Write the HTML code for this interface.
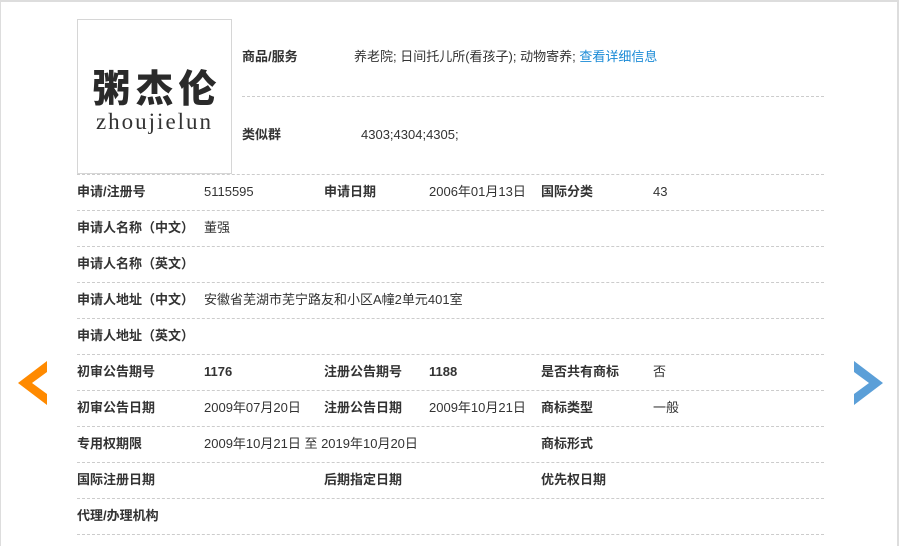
<!DOCTYPE html>
<html><head><meta charset="utf-8"><style>
*{margin:0;padding:0;box-sizing:border-box}
body{width:901px;height:546px;background:#fff;position:relative;overflow:hidden;font-family:"Liberation Sans","Noto Sans CJK SC",sans-serif;font-size:13px;color:#333}
.frame{position:absolute;left:0;top:0;width:899px;height:546px;border-left:1px solid #ddd;border-top:2px solid #ddd;border-right:2px solid #ddd}
.logo{position:absolute;left:77px;top:19px;width:155px;height:155px;border:1px solid #d6d6d6;text-align:center}
.logo .cn{font-family:"Noto Sans CJK SC",sans-serif;font-weight:900;font-size:38px;color:#2a2a2a;margin-top:46px;line-height:40px;letter-spacing:5px;padding-left:5px}
.logo .en{font-family:"Liberation Serif",serif;font-size:23px;color:#333;letter-spacing:2px;line-height:26px;margin-top:3px}
.line{position:absolute;border-top:1px dashed #ccc;height:0}
.t{position:absolute;white-space:nowrap;line-height:16px}
.b{font-weight:bold}
a{color:#1a8ad6;text-decoration:none}
</style></head><body>
<div class="frame"></div>
<div class="logo"><div class="cn">粥杰伦</div><div class="en">zhoujielun</div></div>
<div class="t b" style="left:242px;top:49px">商品/服务</div>
<div class="t" style="left:354px;top:49px">养老院; 日间托儿所(看孩子); 动物寄养; <a>查看详细信息</a></div>
<div class="line" style="left:242px;width:582px;top:96px"></div>
<div class="t b" style="left:242px;top:127px">类似群</div>
<div class="t" style="left:361px;top:127px">4303;4304;4305;</div>
<div class="line" style="left:77px;width:747px;top:174px"></div>

<div class="t b" style="left:77px;top:184px">申请/注册号</div>
<div class="t" style="left:204px;top:184px">5115595</div>
<div class="t b" style="left:324px;top:184px">申请日期</div>
<div class="t" style="left:429px;top:184px">2006年01月13日</div>
<div class="t b" style="left:541px;top:184px">国际分类</div>
<div class="t" style="left:653px;top:184px">43</div>
<div class="line" style="left:77px;width:747px;top:210px"></div>

<div class="t b" style="left:77px;top:220px">申请人名称（中文）</div>
<div class="t" style="left:204px;top:220px">董强</div>
<div class="line" style="left:77px;width:747px;top:246px"></div>
<div class="t b" style="left:77px;top:256px">申请人名称（英文）</div>
<div class="line" style="left:77px;width:747px;top:282px"></div>
<div class="t b" style="left:77px;top:292px">申请人地址（中文）</div>
<div class="t" style="left:204px;top:292px">安徽省芜湖市芜宁路友和小区A幢2单元401室</div>
<div class="line" style="left:77px;width:747px;top:318px"></div>
<div class="t b" style="left:77px;top:328px">申请人地址（英文）</div>
<div class="line" style="left:77px;width:747px;top:354px"></div>

<div class="t b" style="left:77px;top:364px">初审公告期号</div>
<div class="t b" style="left:204px;top:364px">1176</div>
<div class="t b" style="left:324px;top:364px">注册公告期号</div>
<div class="t b" style="left:429px;top:364px">1188</div>
<div class="t b" style="left:541px;top:364px">是否共有商标</div>
<div class="t" style="left:653px;top:364px">否</div>
<div class="line" style="left:77px;width:747px;top:390px"></div>

<div class="t b" style="left:77px;top:400px">初审公告日期</div>
<div class="t" style="left:204px;top:400px">2009年07月20日</div>
<div class="t b" style="left:324px;top:400px">注册公告日期</div>
<div class="t" style="left:429px;top:400px">2009年10月21日</div>
<div class="t b" style="left:541px;top:400px">商标类型</div>
<div class="t" style="left:653px;top:400px">一般</div>
<div class="line" style="left:77px;width:747px;top:426px"></div>

<div class="t b" style="left:77px;top:436px">专用权期限</div>
<div class="t" style="left:204px;top:436px">2009年10月21日 至 2019年10月20日</div>
<div class="t b" style="left:541px;top:436px">商标形式</div>
<div class="line" style="left:77px;width:747px;top:462px"></div>

<div class="t b" style="left:77px;top:472px">国际注册日期</div>
<div class="t b" style="left:324px;top:472px">后期指定日期</div>
<div class="t b" style="left:541px;top:472px">优先权日期</div>
<div class="line" style="left:77px;width:747px;top:498px"></div>
<div class="t b" style="left:77px;top:508px">代理/办理机构</div>
<div class="line" style="left:77px;width:747px;top:534px"></div>

<svg style="position:absolute;left:18px;top:361px" width="30" height="45"><polygon points="29,0 0,22 29,44 29,33 14,22 29,11" fill="#ff8a00"/></svg>
<svg style="position:absolute;left:854px;top:361px" width="30" height="45"><polygon points="0,0 29,22 0,44 0,33 15,22 0,11" fill="#5b9fd8"/></svg>
</body></html>
